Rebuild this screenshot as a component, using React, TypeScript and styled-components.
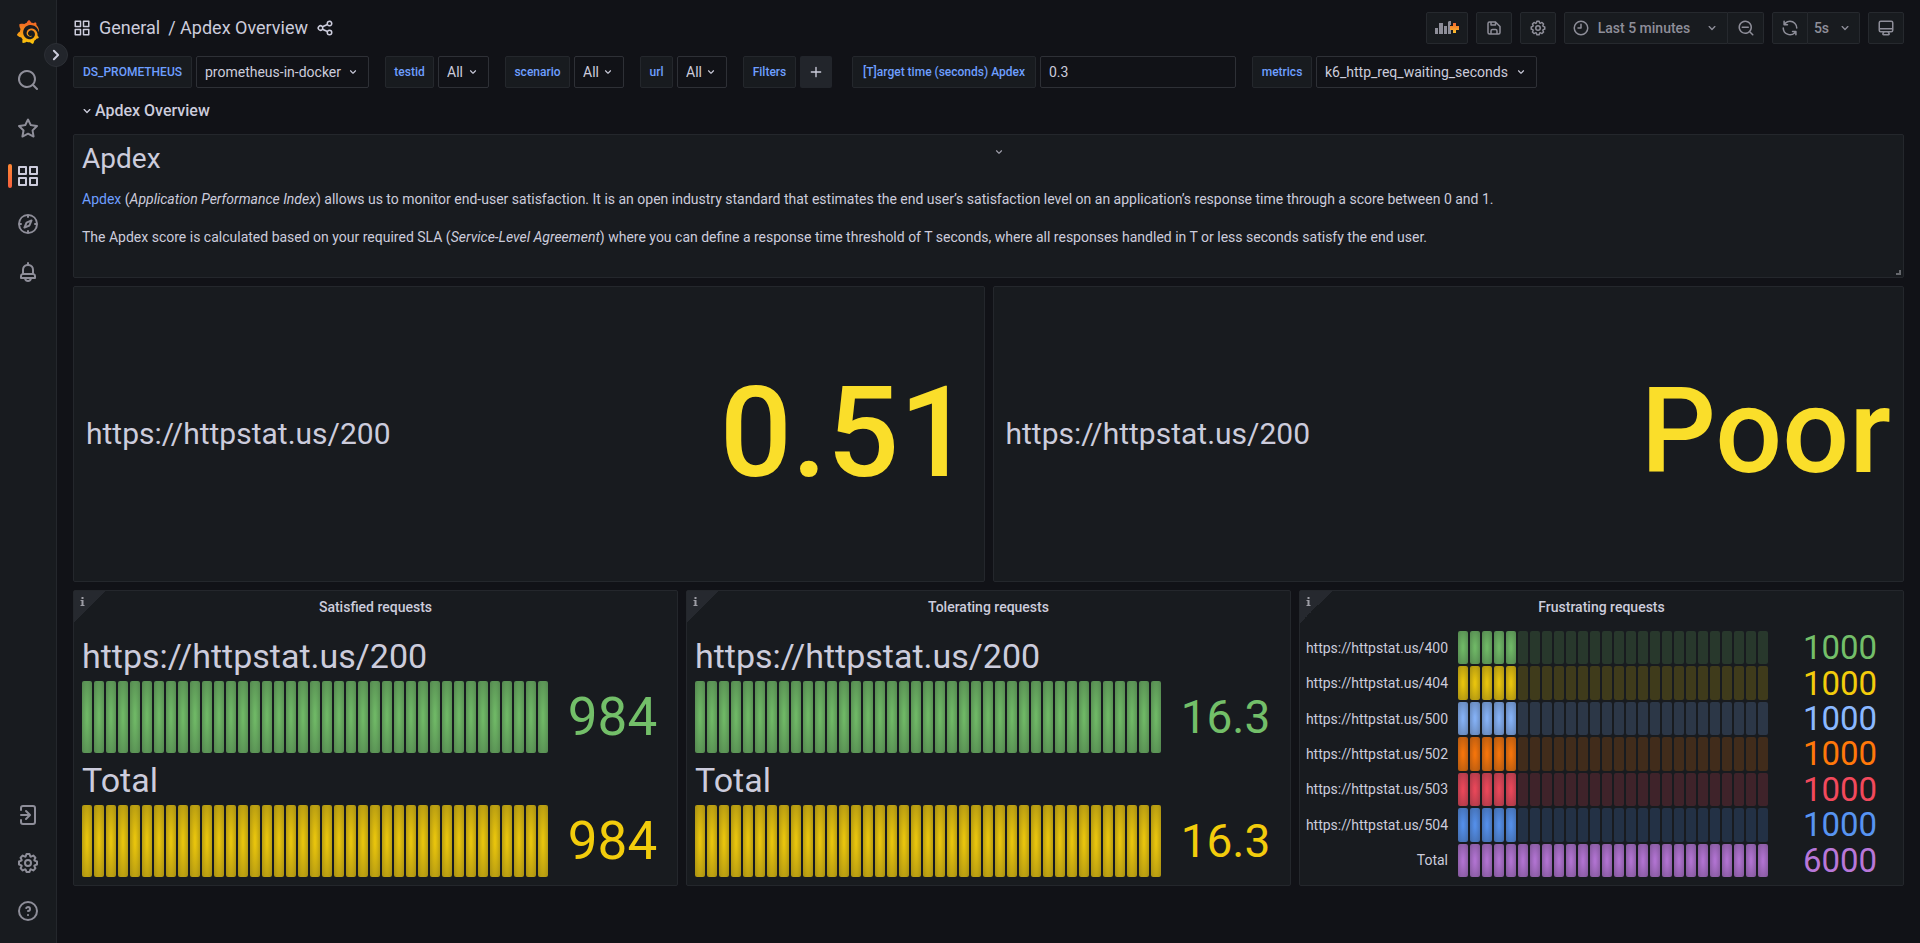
import React, { useId } from "react";
import styled, { createGlobalStyle } from "styled-components";
import { SiGrafana } from "react-icons/si";

const GlobalStyle = createGlobalStyle`
  *, *::before, *::after { box-sizing: border-box; }
  html, body, #root { margin: 0; padding: 0; }
  body {
    background: #111217;
    color: #ccccdc;
    font-family: Roboto, "Liberation Sans", sans-serif;
    font-size: 14px;
    line-height: 22px;
  }
  button, input, select { font: inherit; color: inherit; margin: 0; }
  a { color: inherit; text-decoration: none; }
`;

const ICONS = {
  search:
    "M21.71,20.29,18,16.61A9,9,0,1,0,16.61,18l3.68,3.68a1,1,0,0,0,1.42,0A1,1,0,0,0,21.71,20.29ZM11,18a7,7,0,1,1,7-7A7,7,0,0,1,11,18Z",
  star: "M22,9.67A1,1,0,0,0,21.14,9l-5.69-.83L12.9,3a1,1,0,0,0-1.8,0L8.55,8.16,2.86,9a1,1,0,0,0-.81.68,1,1,0,0,0,.25,1l4.13,4-1,5.68A1,1,0,0,0,6.9,21.44L12,18.77l5.1,2.67a.93.93,0,0,0,.46.12,1,1,0,0,0,.59-.19,1,1,0,0,0,.4-1l-1-5.68,4.13-4A1,1,0,0,0,22,9.67Zm-6.15,4a1,1,0,0,0-.29.88l.72,4.2-3.76-2a1.06,1.06,0,0,0-.94,0l-3.76,2,.72-4.2a1,1,0,0,0-.29-.88l-3-3,4.21-.61a1,1,0,0,0,.76-.55L12,5.7l1.88,3.82a1,1,0,0,0,.76.55l4.21.61Z",
  apps: "M10,13H3a1,1,0,0,0-1,1v7a1,1,0,0,0,1,1h7a1,1,0,0,0,1-1V14A1,1,0,0,0,10,13ZM9,20H4V15H9ZM21,2H14a1,1,0,0,0-1,1v7a1,1,0,0,0,1,1h7a1,1,0,0,0,1-1V3A1,1,0,0,0,21,2ZM20,9H15V4h5Zm1,4H14a1,1,0,0,0-1,1v7a1,1,0,0,0,1,1h7a1,1,0,0,0,1-1V14A1,1,0,0,0,21,13Zm-1,7H15V15h5ZM10,2H3A1,1,0,0,0,2,3v7a1,1,0,0,0,1,1h7a1,1,0,0,0,1-1V3A1,1,0,0,0,10,2ZM9,9H4V4H9Z",
  compass:
    "M12,2A10,10,0,1,0,22,12,10,10,0,0,0,12,2Zm1,17.93V19a1,1,0,0,0-2,0v.93A8,8,0,0,1,4.07,13H5a1,1,0,0,0,0-2H4.07A8,8,0,0,1,11,4.07V5a1,1,0,0,0,2,0V4.07A8,8,0,0,1,19.93,11H19a1,1,0,0,0,0,2h.93A8,8,0,0,1,13,19.93ZM15.14,7.55l-5,2.12a1,1,0,0,0-.52.52l-2.12,5a1,1,0,0,0,.21,1.1,1,1,0,0,0,.7.3.93.93,0,0,0,.4-.09l5-2.12a1,1,0,0,0,.52-.52l2.12-5a1,1,0,0,0-1.31-1.31Zm-2.49,5.1-2.28,1,1-2.28,2.28-1Z",
  bell: "M18,13.18V10a6,6,0,0,0-5-5.91V3a1,1,0,0,0-2,0V4.09A6,6,0,0,0,6,10v3.18A3,3,0,0,0,4,16v2a1,1,0,0,0,1,1H8.14a4,4,0,0,0,7.72,0H19a1,1,0,0,0,1-1V16A3,3,0,0,0,18,13.18ZM8,10a4,4,0,0,1,8,0v3H8Zm4,10a2,2,0,0,1-1.72-1h3.44A2,2,0,0,1,12,20Zm6-3H6V16a1,1,0,0,1,1-1H17a1,1,0,0,1,1,1Z",
  signin:
    "M7,2H17a3,3,0,0,1,3,3V19a3,3,0,0,1-3,3H7a3,3,0,0,1-3-3V17a1,1,0,0,1,2,0v2a1,1,0,0,0,1,1H17a1,1,0,0,0,1-1V5a1,1,0,0,0-1-1H7A1,1,0,0,0,6,5V7A1,1,0,0,1,4,7V5A3,3,0,0,1,7,2ZM5,11h6.59L9.29,8.71a1,1,0,0,1,1.42-1.42l4,4a1,1,0,0,1,0,1.42l-4,4a1,1,0,0,1-1.42-1.42L11.59,13H5a1,1,0,0,1,0-2Z",
  cog: "M21.32,9.55l-1.89-.63.89-1.78A1,1,0,0,0,20.13,6L18,3.87a1,1,0,0,0-1.15-.19l-1.78.89-.63-1.89A1,1,0,0,0,13.5,2h-3a1,1,0,0,0-.95.68L8.92,4.57,7.14,3.68A1,1,0,0,0,6,3.87L3.87,6a1,1,0,0,0-.19,1.15l.89,1.78-1.89.63A1,1,0,0,0,2,10.5v3a1,1,0,0,0,.68.95l1.89.63-.89,1.78A1,1,0,0,0,3.87,18L6,20.13a1,1,0,0,0,1.15.19l1.78-.89.63,1.89a1,1,0,0,0,.95.68h3a1,1,0,0,0,.95-.68l.63-1.89,1.78.89A1,1,0,0,0,18,20.13L20.13,18a1,1,0,0,0,.19-1.15l-.89-1.78,1.89-.63A1,1,0,0,0,22,13.5v-3A1,1,0,0,0,21.32,9.55ZM20,12.78l-1.2.4A2,2,0,0,0,17.64,16l.57,1.14-1.1,1.1L16,17.64a2,2,0,0,0-2.79,1.16l-.4,1.2H11.22l-.4-1.2A2,2,0,0,0,8,17.64l-1.14.57-1.1-1.1L6.36,16A2,2,0,0,0,5.2,13.18L4,12.78V11.22l1.2-.4A2,2,0,0,0,6.36,8L5.79,6.89l1.1-1.1L8,6.36A2,2,0,0,0,10.82,5.2l.4-1.2h1.56l.4,1.2A2,2,0,0,0,16,6.36l1.14-.57,1.1,1.1L17.64,8a2,2,0,0,0,1.16,2.79l1.2.4ZM12,8a4,4,0,1,0,4,4A4,4,0,0,0,12,8Zm0,6a2,2,0,1,1,2-2A2,2,0,0,1,12,14Z",
  help: "M11.29,15.29a1.58,1.58,0,0,0-.12.15.76.76,0,0,0-.09.18.64.64,0,0,0-.06.18,1.36,1.36,0,0,0,0,.2.84.84,0,0,0,.08.38.9.9,0,0,0,.54.54.94.94,0,0,0,.76,0,.9.9,0,0,0,.54-.54A1,1,0,0,0,13,16a1,1,0,0,0-.29-.71A1,1,0,0,0,11.29,15.29ZM12,2A10,10,0,1,0,22,12,10,10,0,0,0,12,2Zm0,18a8,8,0,1,1,8-8A8,8,0,0,1,12,20ZM12,7A3,3,0,0,0,9.4,8.5a1,1,0,1,0,1.73,1A1,1,0,0,1,12,9a1,1,0,0,1,0,2,1,1,0,1,0,0,2,3,3,0,0,0,0-6Z",
  share:
    "M18,14a4,4,0,0,0-3.08,1.48l-5.1-2.35a3.64,3.64,0,0,0,0-2.26l5.1-2.35A4,4,0,1,0,14,6a4.17,4.17,0,0,0,.07.71L8.79,9.14a4,4,0,1,0,0,5.72l5.28,2.43A4.17,4.17,0,0,0,14,18a4,4,0,1,0,4-4ZM18,4a2,2,0,1,1-2,2A2,2,0,0,1,18,4ZM6,14a2,2,0,1,1,2-2A2,2,0,0,1,6,14Zm12,6a2,2,0,1,1,2-2A2,2,0,0,1,18,20Z",
  angleDown:
    "M17,9.17a1,1,0,0,0-1.41,0L12,12.71,8.46,9.17a1,1,0,0,0-1.41,0,1,1,0,0,0,0,1.42l4.24,4.24a1,1,0,0,0,1.42,0L17,10.59A1,1,0,0,0,17,9.17Z",
  angleRight:
    "M14.83,11.29,10.59,7.05a1,1,0,0,0-1.42,0,1,1,0,0,0,0,1.41L12.71,12,9.17,15.54a1,1,0,0,0,0,1.41,1,1,0,0,0,.71.29,1,1,0,0,0,.71-.29l4.24-4.24A1,1,0,0,0,14.83,11.29Z",
  save: "M20.71,9.29l-6-6a1,1,0,0,0-.32-.21A1.09,1.09,0,0,0,14,3H6A3,3,0,0,0,3,6V18a3,3,0,0,0,3,3H18a3,3,0,0,0,3-3V10A1,1,0,0,0,20.71,9.29ZM9,5h4V7H9Zm6,14H9V16a1,1,0,0,1,1-1h4a1,1,0,0,1,1,1Zm4-1a1,1,0,0,1-1,1H17V16a3,3,0,0,0-3-3H10a3,3,0,0,0-3,3v3H6a1,1,0,0,1-1-1V6A1,1,0,0,1,6,5H7V8A1,1,0,0,0,8,9h6a1,1,0,0,0,1-1V6.41l4,4Z",
  clock:
    "M12,2A10,10,0,1,0,22,12,10,10,0,0,0,12,2Zm0,18a8,8,0,1,1,8-8A8,8,0,0,1,12,20ZM12,6a1,1,0,0,0-1,1v4H8a1,1,0,0,0,0,2h4a1,1,0,0,0,1-1V7A1,1,0,0,0,12,6Z",
  zoomOut:
    "M21.71,20.29,18,16.61A9,9,0,1,0,16.61,18l3.68,3.68a1,1,0,0,0,1.42,0A1,1,0,0,0,21.71,20.29ZM11,18a7,7,0,1,1,7-7A7,7,0,0,1,11,18Zm4-8H7a1,1,0,0,0,0,2h8a1,1,0,0,0,0-2Z",
  sync: "M19.91,15.51H15.38a1,1,0,0,0,0,2h2.4A8,8,0,0,1,4,12a1,1,0,0,0-2,0,10,10,0,0,0,16.88,7.23V21a1,1,0,0,0,2,0V16.5A1,1,0,0,0,19.91,15.51ZM12,2A10,10,0,0,0,5.12,4.77V3a1,1,0,0,0-2,0V7.5a1,1,0,0,0,1,1h4.5a1,1,0,0,0,0-2H6.22A8,8,0,0,1,20,12a1,1,0,0,0,2,0A10,10,0,0,0,12,2Z",
  monitor:
    "M19,2H5A3,3,0,0,0,2,5V15a3,3,0,0,0,3,3H7.64l-.58,1a2,2,0,0,0,0,2,2,2,0,0,0,1.75,1h6.46A2,2,0,0,0,17,21a2,2,0,0,0,0-2l-.59-1H19a3,3,0,0,0,3-3V5A3,3,0,0,0,19,2ZM8.77,20,10,18H14l1.2,2ZM20,15a1,1,0,0,1-1,1H5a1,1,0,0,1-1-1V14H20Zm0-3H4V5A1,1,0,0,1,5,4H19a1,1,0,0,1,1,1Z",
  plus: "M19,11H13V5a1,1,0,0,0-2,0v6H5a1,1,0,0,0,0,2h6v6a1,1,0,0,0,2,0V13h6a1,1,0,0,0,0-2Z",
};

type IconName = keyof typeof ICONS;

const IconSvg = styled.svg`
  display: block;
  flex: none;
  fill: currentColor;
`;

function Icon({ name, size = 16 }: { name: IconName; size?: number }) {
  return (
    <IconSvg viewBox="0 0 24 24" width={size} height={size} aria-hidden="true">
      <path d={ICONS[name]} />
    </IconSvg>
  );
}

/* ---------- shell ---------- */

const Shell = styled.div`
  display: flex;
  min-height: 100vh;
`;

const Sidebar = styled.nav`
  position: relative;
  flex: none;
  display: flex;
  flex-direction: column;
  width: 57px;
  padding: 8px 0;
  background: #181b1f;
  border-right: 1px solid #24272c;
`;

const NavLink = styled.a<{ $active?: boolean }>`
  position: relative;
  display: flex;
  align-items: center;
  justify-content: center;
  height: 48px;
  color: ${(p) => (p.$active ? "#ccccdc" : "#8e8e99")};

  &::before {
    content: "";
    display: ${(p) => (p.$active ? "block" : "none")};
    position: absolute;
    left: 8px;
    top: 12px;
    bottom: 12px;
    width: 4px;
    border-radius: 2px;
    background: linear-gradient(#ff8833, #f55f3e);
  }
`;

const Logo = styled(SiGrafana)`
  display: block;
  width: 24px;
  height: 24px;
  && { fill: url(#logo-gradient); stroke: none; }
`;

const GradientDefs = styled.svg`
  position: absolute;
  width: 0;
  height: 0;
`;

const NavSpacer = styled.div`
  flex: 1;
`;

const ExpandButton = styled.button`
  position: absolute;
  z-index: 1;
  top: 43px;
  right: -12px;
  display: flex;
  align-items: center;
  justify-content: center;
  width: 24px;
  height: 24px;
  padding: 0;
  border: 1px solid #2c2f35;
  border-radius: 50%;
  background: #22252b;
  color: #ccccdc;
`;

const Main = styled.main`
  flex: 1;
  min-width: 0;
  padding: 0 16px 16px;
`;

/* ---------- top toolbar ---------- */

const TopBar = styled.header`
  display: flex;
  align-items: center;
  gap: 8px;
  height: 56px;
`;

const Breadcrumb = styled.h1`
  display: flex;
  align-items: center;
  gap: 8px;
  margin: 0 auto 0 0;
  font-size: 18px;
  font-weight: 400;
  line-height: 24px;
`;

const Crumb = styled.a`
  white-space: nowrap;
`;

const PlainButton = styled.button`
  display: flex;
  align-items: center;
  padding: 0;
  border: 0;
  background: none;
  color: #ccccdc;
`;

const ButtonGroup = styled.div`
  display: flex;

  & > :not(:first-child) {
    border-left: 0;
    border-top-left-radius: 0;
    border-bottom-left-radius: 0;
  }
  & > :not(:last-child) {
    border-top-right-radius: 0;
    border-bottom-right-radius: 0;
  }
`;

const ToolButton = styled.button<{ $width?: number }>`
  display: flex;
  align-items: center;
  justify-content: center;
  gap: 8px;
  width: ${(p) => (p.$width ? `${p.$width}px` : "36px")};
  height: 32px;
  padding: 0;
  border: 1px solid #26292e;
  border-radius: 2px;
  background: #181b1f;
  color: #8e8e99;
  font-weight: 500;
`;

const TimeLabel = styled.span`
  margin-right: 6px;
`;

/* ---------- variables ---------- */

const Variables = styled.form`
  display: flex;
  flex-wrap: wrap;
  gap: 16px;
`;

const Variable = styled.div`
  display: flex;
  gap: 4px;
`;

const VariableLabel = styled.label<{ $width: number }>`
  display: flex;
  align-items: center;
  justify-content: center;
  min-width: ${(p) => p.$width}px;
  height: 32px;
  padding: 0 4px;
  border: 1px solid #24272c;
  border-radius: 2px;
  background: #181b1f;
  color: #6e9fff;
  font-size: 12px;
  font-weight: 500;
`;

const SelectFrame = styled.div`
  position: relative;
  display: flex;
  align-items: center;
`;

const Select = styled.select<{ $width: number }>`
  appearance: none;
  width: ${(p) => p.$width}px;
  height: 32px;
  padding: 0 24px 0 8px;
  border: 1px solid #2e3036;
  border-radius: 2px;
  background: #111217;
  outline: none;
`;

const SelectArrow = styled.span`
  position: absolute;
  right: 9px;
  pointer-events: none;
`;

const TextInput = styled.input`
  width: 196px;
  height: 32px;
  padding: 0 8px;
  border: 1px solid #2e3036;
  border-radius: 2px;
  background: #111217;
  outline: none;
`;

const AddButton = styled.button`
  display: flex;
  align-items: center;
  justify-content: center;
  width: 32px;
  height: 32px;
  padding: 0;
  margin-right: 4px;
  border: 0;
  border-radius: 2px;
  background: #22252b;
`;

interface SelectVariableProps {
  name: string;
  value: string;
  labelWidth: number;
  width: number;
}

function SelectVariable({ name, value, labelWidth, width }: SelectVariableProps) {
  const id = useId();
  return (
    <Variable>
      <VariableLabel htmlFor={id} $width={labelWidth}>
        {name}
      </VariableLabel>
      <SelectFrame>
        <Select id={id} $width={width} defaultValue={value}>
          <option>{value}</option>
        </Select>
        <SelectArrow>
          <Icon name="angleDown" size={14} />
        </SelectArrow>
      </SelectFrame>
    </Variable>
  );
}

/* ---------- dashboard ---------- */

const RowHeading = styled.h2`
  margin: 0;
  padding: 7px 0 7px 6px;
  font-size: 16px;
  font-weight: 500;
  line-height: 32px;
`;

const RowToggle = styled(PlainButton)`
  line-height: 32px;
  font-weight: 500;
`;

const Grid = styled.div`
  display: grid;
  gap: 8px;
`;

const GridRow = styled.div<{ $columns: number }>`
  display: grid;
  grid-template-columns: repeat(${(p) => p.$columns}, minmax(0, 1fr));
  gap: 8px;
`;

const Panel = styled.section<{ $units: number }>`
  position: relative;
  display: flex;
  flex-direction: column;
  min-height: ${(p) => p.$units * 38 - 8}px;
  border: 1px solid #24272c;
  border-radius: 2px;
  background: #181b1f;
`;

const PanelMenuButton = styled(PlainButton)`
  position: absolute;
  top: 9px;
  left: 50%;
  width: 16px;
  height: 16px;
  margin-left: 2px;
  justify-content: center;
  color: #a0a0ac;
`;

const ResizeHandle = styled.span`
  position: absolute;
  right: 2px;
  bottom: 2px;
  width: 5px;
  height: 5px;
  border-right: 2px solid #66686d;
  border-bottom: 2px solid #66686d;
`;

const Prose = styled.div`
  padding: 8px;

  h1 {
    margin: 0 0 13px;
    font-size: 28px;
    font-weight: 400;
    line-height: 32px;
  }
  p {
    margin: 0 0 16px;
  }
  a {
    color: #6e9fff;
  }
`;

const StatBody = styled.div`
  flex: 1;
  display: flex;
  align-items: center;
  justify-content: space-between;
  padding: 0 12px;
  line-height: 1;
`;

const StatName = styled.span`
  font-size: 30px;
`;

const StatValue = styled.span<{ $size: number }>`
  padding-bottom: 4px;
  color: #fade2a;
  font-size: ${(p) => p.$size}px;
  font-weight: 500;
`;

const PanelHeader = styled.h3`
  margin: 0;
  font-size: 14px;
  font-weight: 500;
  line-height: 32px;
  text-align: center;
`;

const InfoCorner = styled.button`
  position: absolute;
  top: 0;
  left: 0;
  width: 32px;
  height: 32px;
  padding: 0;
  border: 0;
  background: linear-gradient(135deg, #26292f 50%, transparent 50%);
  color: #9d9ea6;
`;

const InfoIcon = styled.svg`
  position: absolute;
  top: 6px;
  left: 6px;
  fill: currentColor;
`;

const GaugeBody = styled.div`
  flex: 1;
  display: flex;
  flex-direction: column;
  gap: 2px;
  padding: 8px;
`;

const StackedGauge = styled.div`
  flex: 1;
  display: flex;
  flex-direction: column;
`;

const StackedTitle = styled.div`
  height: 50px;
  font-size: 34px;
  line-height: 50px;
`;

const GaugeLine = styled.div`
  flex: 1;
  display: flex;
  align-items: stretch;
`;

const InlineTitle = styled.div`
  display: flex;
  align-items: center;
  justify-content: flex-end;
  width: 140px;
  margin-right: 10px;
  line-height: 20px;
`;

const Cells = styled.div<{ $count: number }>`
  flex: 1;
  display: grid;
  grid-template-columns: repeat(${(p) => p.$count}, minmax(0, 1fr));
  gap: 2px;
`;

const Cell = styled.span<{ $color: string; $lit: boolean }>`
  border-radius: 2px;
  background: ${(p) =>
    p.$lit
      ? `radial-gradient(rgba(${p.$color}, 0.95) 10%, rgba(${p.$color}, 0.65))`
      : `rgba(${p.$color}, 0.18)`};
`;

const GaugeValue = styled.output<{ $color: string; $size: number; $inline?: boolean }>`
  display: flex;
  align-items: center;
  justify-content: center;
  width: ${(p) => (p.$inline ? 110 : 113)}px;
  margin-left: ${(p) => (p.$inline ? 17 : 8)}px;
  color: rgb(${(p) => p.$color});
  font-size: ${(p) => p.$size}px;
  line-height: 1;
`;

interface Gauge {
  title: string;
  value: string;
  color: string;
  lit: number;
}

const GREEN = "115, 191, 105";
const YELLOW = "242, 204, 12";

const FRUSTRATING: Gauge[] = [
  { title: "https://httpstat.us/400", value: "1000", color: GREEN, lit: 5 },
  { title: "https://httpstat.us/404", value: "1000", color: YELLOW, lit: 5 },
  { title: "https://httpstat.us/500", value: "1000", color: "138, 184, 255", lit: 5 },
  { title: "https://httpstat.us/502", value: "1000", color: "255, 120, 10", lit: 5 },
  { title: "https://httpstat.us/503", value: "1000", color: "242, 73, 92", lit: 5 },
  { title: "https://httpstat.us/504", value: "1000", color: "87, 148, 242", lit: 5 },
  { title: "Total", value: "6000", color: "184, 119, 217", lit: 26 },
];

function CellBar({ count, lit, color }: { count: number; lit: number; color: string }) {
  return (
    <Cells $count={count}>
      {Array.from({ length: count }, (_, i) => (
        <Cell key={i} $color={color} $lit={i < lit} />
      ))}
    </Cells>
  );
}

function PanelTop({ title }: { title: string }) {
  return (
    <>
      <InfoCorner aria-label={`About ${title}`}>
        <InfoIcon width="5" height="9" viewBox="0 0 5 9" aria-hidden="true">
          <path d="M1.5 0h2v2h-2zM.5 3h3v5h1v1h-4v-1h1v-4h-1z" />
        </InfoIcon>
      </InfoCorner>
      <PanelHeader>{title}</PanelHeader>
    </>
  );
}

function StackedPanel({ title, value, size }: { title: string; value: string; size: number }) {
  const gauges = [
    { title: "https://httpstat.us/200", color: GREEN },
    { title: "Total", color: YELLOW },
  ];
  return (
    <Panel $units={8}>
      <PanelTop title={title} />
      <GaugeBody>
        {gauges.map((g) => (
          <StackedGauge key={g.title}>
            <StackedTitle>{g.title}</StackedTitle>
            <GaugeLine>
              <CellBar count={39} lit={39} color={g.color} />
              <GaugeValue $color={g.color} $size={size}>
                {value}
              </GaugeValue>
            </GaugeLine>
          </StackedGauge>
        ))}
      </GaugeBody>
    </Panel>
  );
}

function StatPanel({ value, size }: { value: string; size: number }) {
  return (
    <Panel $units={8}>
      <StatBody>
        <StatName>https://httpstat.us/200</StatName>
        <StatValue $size={size}>{value}</StatValue>
      </StatBody>
    </Panel>
  );
}

function AddPanelIcon() {
  return (
    <svg width="24" height="14" viewBox="0 0 24 14" aria-hidden="true">
      <defs>
        <linearGradient id="add-gradient" x1="0" y1="0" x2="0" y2="1">
          <stop offset="0" stopColor="#f2662e" />
          <stop offset="1" stopColor="#fbc02d" />
        </linearGradient>
      </defs>
      <path fill="#8e8e99" d="M0 7h3v6H0zM4 2h4v11H4zM9 5h3v8H9zM13 1l1-1h2v4h-1v5h1v4h-3z" />
      <path fill="url(#add-gradient)" d="M18 2h3v3h3v4h-3v3h-3V9h-3V5h3z" />
    </svg>
  );
}

const TOP_NAV: { name: IconName; label: string; active?: boolean }[] = [
  { name: "search", label: "Search" },
  { name: "star", label: "Starred" },
  { name: "apps", label: "Dashboards", active: true },
  { name: "compass", label: "Explore" },
  { name: "bell", label: "Alerting" },
];

const BOTTOM_NAV: { name: IconName; label: string }[] = [
  { name: "signin", label: "Sign in" },
  { name: "cog", label: "Configuration" },
  { name: "help", label: "Help" },
];

export default function App() {
  return (
    <>
      <GlobalStyle />
      <Shell>
        <Sidebar aria-label="Main">
          <GradientDefs aria-hidden="true">
            <linearGradient id="logo-gradient" x1="0" y1="0" x2="0" y2="1">
              <stop offset="0" stopColor="#f05a28" />
              <stop offset="1" stopColor="#fbca0a" />
            </linearGradient>
          </GradientDefs>
          <NavLink href="#home" aria-label="Home">
            <Logo />
          </NavLink>
          {TOP_NAV.map((item) => (
            <NavLink key={item.name} href={`#${item.name}`} aria-label={item.label} $active={item.active}>
              <Icon name={item.name} size={24} />
            </NavLink>
          ))}
          <NavSpacer />
          {BOTTOM_NAV.map((item) => (
            <NavLink key={item.name} href={`#${item.name}`} aria-label={item.label}>
              <Icon name={item.name} size={24} />
            </NavLink>
          ))}
          <ExpandButton aria-label="Expand navigation">
            <Icon name="angleRight" size={24} />
          </ExpandButton>
        </Sidebar>

        <Main>
          <TopBar>
            <Breadcrumb>
              <Icon name="apps" size={18} />
              <Crumb href="#general">General</Crumb>
              <Crumb href="#apdex">/ Apdex Overview</Crumb>
              <PlainButton aria-label="Share dashboard">
                <Icon name="share" size={18} />
              </PlainButton>
            </Breadcrumb>
            <ToolButton $width={42} aria-label="Add panel">
              <AddPanelIcon />
            </ToolButton>
            <ToolButton aria-label="Save dashboard">
              <Icon name="save" size={18} />
            </ToolButton>
            <ToolButton aria-label="Dashboard settings">
              <Icon name="cog" size={18} />
            </ToolButton>
            <ButtonGroup>
              <ToolButton $width={164}>
                <Icon name="clock" size={18} />
                <TimeLabel>Last 5 minutes</TimeLabel>
                <Icon name="angleDown" />
              </ToolButton>
              <ToolButton aria-label="Zoom out">
                <Icon name="zoomOut" size={18} />
              </ToolButton>
            </ButtonGroup>
            <ButtonGroup>
              <ToolButton aria-label="Refresh">
                <Icon name="sync" size={18} />
              </ToolButton>
              <ToolButton $width={52}>
                5s
                <Icon name="angleDown" />
              </ToolButton>
            </ButtonGroup>
            <ToolButton aria-label="Cycle view mode">
              <Icon name="monitor" size={18} />
            </ToolButton>
          </TopBar>

          <Variables>
            <SelectVariable name="DS_PROMETHEUS" value="prometheus-in-docker" labelWidth={119} width={173} />
            <SelectVariable name="testid" value="All" labelWidth={49} width={51} />
            <SelectVariable name="scenario" value="All" labelWidth={65} width={50} />
            <SelectVariable name="url" value="All" labelWidth={33} width={50} />
            <Variable>
              <VariableLabel as="span" $width={53}>
                Filters
              </VariableLabel>
              <AddButton type="button" aria-label="Add filter">
                <Icon name="plus" />
              </AddButton>
            </Variable>
            <Variable>
              <VariableLabel htmlFor="target" $width={184}>
                [T]arget time (seconds) Apdex
              </VariableLabel>
              <TextInput id="target" defaultValue="0.3" />
            </Variable>
            <SelectVariable name="metrics" value="k6_http_req_waiting_seconds" labelWidth={60} width={221} />
          </Variables>

          <RowHeading>
            <RowToggle>
              <Icon name="angleDown" />
              Apdex Overview
            </RowToggle>
          </RowHeading>

          <Grid>
            <Panel $units={4}>
              <PanelMenuButton aria-label="Panel menu">
                <Icon name="angleDown" size={14} />
              </PanelMenuButton>
              <Prose>
                <h1>Apdex</h1>
                <p>
                  <a href="#apdex-definition">Apdex</a> (<em>Application Performance Index</em>) allows us to monitor
                  end-user satisfaction. It is an open industry standard that estimates the end user’s satisfaction
                  level on an application’s response time through a score between 0 and 1.
                </p>
                <p>
                  The Apdex score is calculated based on your required SLA (<em>Service-Level Agreement</em>) where you
                  can define a response time threshold of T seconds, where all responses handled in T or less seconds
                  satisfy the end user.
                </p>
              </Prose>
              <ResizeHandle />
            </Panel>

            <GridRow $columns={2}>
              <StatPanel value="0.51" size={127} />
              <StatPanel value="Poor" size={118} />
            </GridRow>

            <GridRow $columns={3}>
              <StackedPanel title="Satisfied requests" value="984" size={53} />
              <StackedPanel title="Tolerating requests" value="16.3" size={46} />
              <Panel $units={8}>
                <PanelTop title="Frustrating requests" />
                <GaugeBody>
                  {FRUSTRATING.map((g) => (
                    <GaugeLine key={g.title}>
                      <InlineTitle>{g.title}</InlineTitle>
                      <CellBar count={26} lit={g.lit} color={g.color} />
                      <GaugeValue $color={g.color} $size={33} $inline>
                        {g.value}
                      </GaugeValue>
                    </GaugeLine>
                  ))}
                </GaugeBody>
              </Panel>
            </GridRow>
          </Grid>
        </Main>
      </Shell>
    </>
  );
}
